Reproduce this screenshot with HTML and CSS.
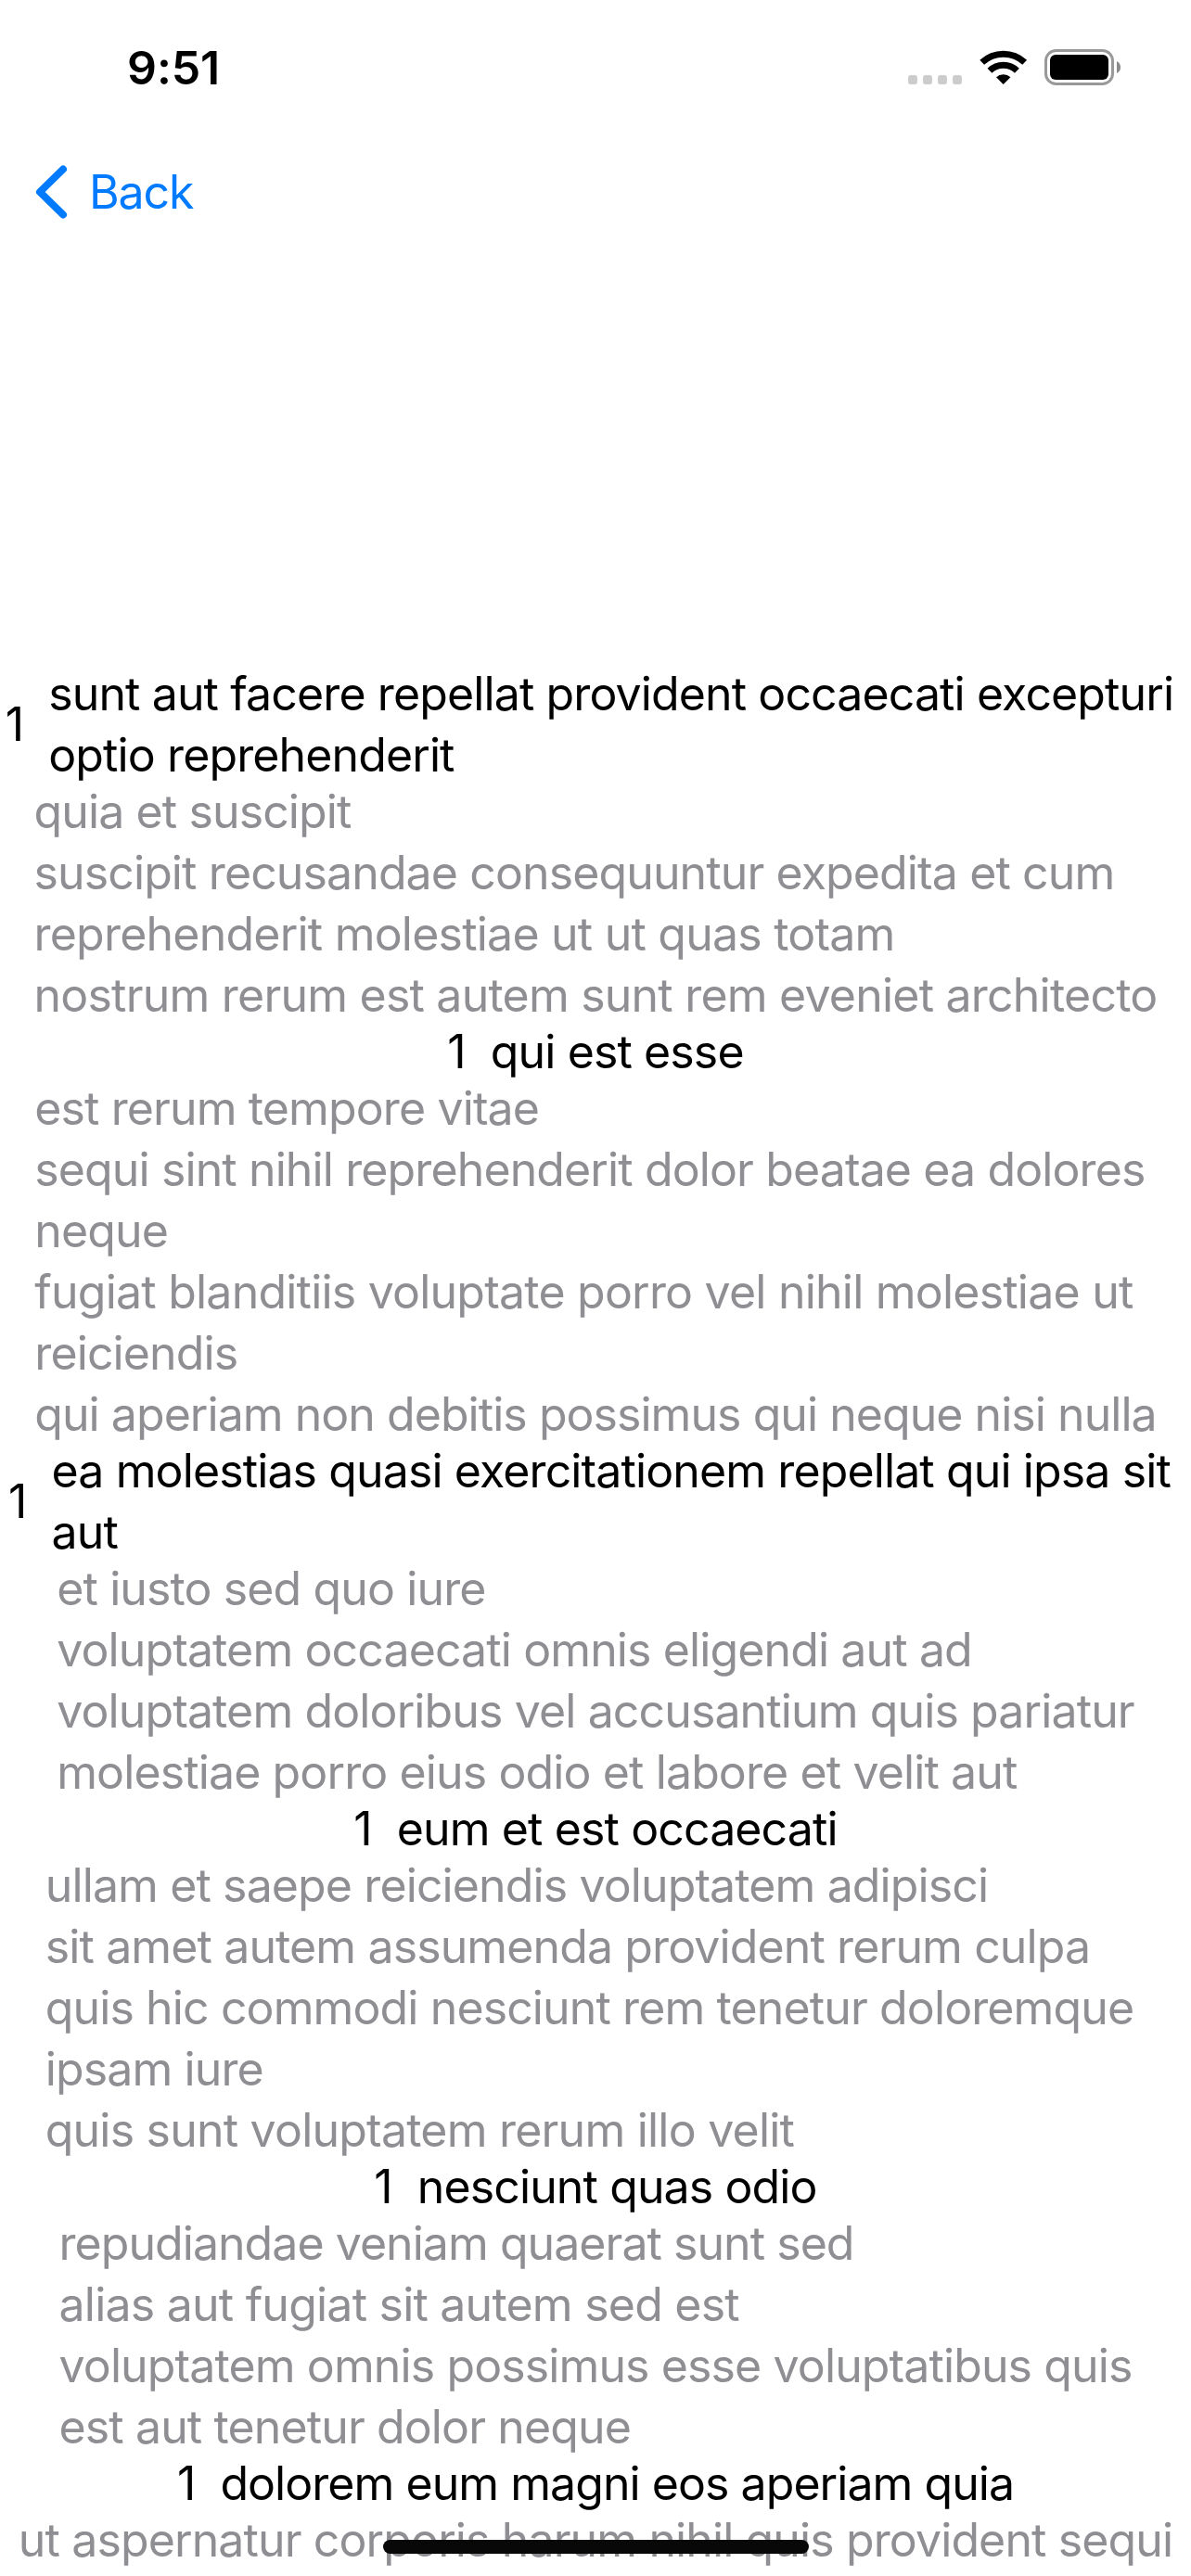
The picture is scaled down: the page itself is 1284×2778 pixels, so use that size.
FILE: index.html
```html
<!DOCTYPE html>
<html lang="en">
<head>
<meta charset="utf-8">
<title>Posts</title>
<link rel="stylesheet" href="styles.css">
</head>
<body>
<div class="screen">
<header class="status">
<span class="time">9:51</span>
<div class="indicators">
<svg class="dots" width="60" height="12" viewBox="0 0 60 12"><g fill="#ccc"><rect width="10" height="10" x="0" y="1" rx="3"/><rect width="10" height="10" x="16" y="1" rx="3"/><rect width="10" height="10" x="32" y="1" rx="3"/><rect width="10" height="10" x="48" y="1" rx="3"/></g></svg>
<svg class="wifi" width="52" height="38" viewBox="0 0 52 38"><g fill="none" stroke="#000" stroke-width="7"><path d="M2.700 13.300a33.500 33.500 0 0 1 46 0"/><path d="M11 22.300a21 21 0 0 1 29.400 0"/></g><path d="M18 29.300a11.500 11.500 0 0 1 15.400 0L25.700 37z"/></svg>
<svg class="battery" width="82" height="40" viewBox="0 0 82 40"><rect x="1.500" y="1.500" width="72" height="36" rx="11" fill="none" stroke="#999" stroke-width="3"/><rect x="6" y="6" width="63" height="27" rx="6"/><path d="M78 13v13q4-2 4-6.500T78 13z" fill="#8a8a8a"/></svg>
</div>
</header>
<nav class="nav"><a class="back"><svg width="36" height="60" viewBox="0 0 36 60"><path d="M31 5.500L6 30l25 24.500" fill="none" stroke="#007aff" stroke-width="8" stroke-linecap="round" stroke-linejoin="round"/></svg><span>Back</span></a></nav>
<main class="posts">
<article class="post"><h2 class="title wrapped"><span class="id">1</span><span>sunt aut facere repellat provident occaecati excepturi<br>optio reprehenderit</span></h2>
<p class="body">quia et suscipit<br>suscipit recusandae consequuntur expedita et cum<br><span class="loose">reprehenderit molestiae ut ut quas totam</span><br><span class="loose">nostrum rerum est autem sunt rem eveniet architecto</span></p></article>
<article class="post"><h2 class="title"><span class="id">1</span><span>qui est esse</span></h2>
<p class="body">est rerum tempore vitae<br>sequi sint nihil reprehenderit dolor beatae ea dolores<br>neque<br><span class="loose">fugiat blanditiis voluptate porro vel nihil molestiae ut</span><br>reiciendis<br><span class="tight">qui aperiam non debitis possimus qui neque nisi nulla</span></p></article>
<article class="post"><h2 class="title wrapped"><span class="id">1</span><span>ea molestias quasi exercitationem repellat qui ipsa sit<br>aut</span></h2>
<p class="body">et iusto sed quo iure<br>voluptatem occaecati omnis eligendi aut ad<br>voluptatem doloribus vel accusantium quis pariatur<br>molestiae porro eius odio et labore et velit aut</p></article>
<article class="post"><h2 class="title"><span class="id">1</span><span>eum et est occaecati</span></h2>
<p class="body wrapped">ullam et saepe reiciendis voluptatem adipisci<br>sit amet autem assumenda provident rerum culpa<br>quis hic commodi nesciunt rem tenetur doloremque<br>ipsam iure<br><span class="loose">quis sunt voluptatem rerum illo velit</span></p></article>
<article class="post"><h2 class="title"><span class="id">1</span><span>nesciunt quas odio</span></h2>
<p class="body"><span class="tight">repudiandae veniam quaerat sunt sed</span><br><span class="loose">alias aut fugiat sit autem sed est</span><br>voluptatem omnis possimus esse voluptatibus quis<br>est aut tenetur dolor neque</p></article>
<article class="post"><h2 class="title"><span class="id">1</span><span class="tight">dolorem eum magni eos aperiam quia</span></h2>
<p class="body">ut aspernatur corporis harum nihil quis provident sequi</p></article>
</main>
<div class="home"></div>
</div>
</body>
</html>
```
FILE: styles.css
```css
body{margin:0;background:#fff}
.screen{position:relative;width:1284px;height:2778px;overflow:hidden;font:400 50px/66px Inter,sans-serif;letter-spacing:-.88px;color:#000}
.status{height:141px;display:flex;justify-content:space-between;box-sizing:border-box;padding:40px 76px 0 137px}
.time{font-weight:600;letter-spacing:-.1px}
.indicators{display:flex;align-items:flex-start}
.dots{margin:40px 17px 0 0}
.wifi{margin:14px 18px 0 0}
.battery{margin-top:13px}
.nav{height:132px;display:flex;align-items:center}
.back{display:flex;align-items:center;gap:23px;margin-left:37px;color:#007aff;letter-spacing:-1.1px}
.posts{padding-top:442px}
.post{display:flex;flex-direction:column;align-items:center}
.title{margin:0 0 -5px;display:flex;align-items:center;gap:27px;font:inherit;white-space:nowrap}
.body{margin:0 0 -5px;color:#8e8e93;white-space:nowrap}
.wrapped{margin-right:13px}
.loose{letter-spacing:-.78px}
.tight{letter-spacing:-.95px}
.home{position:absolute;left:413px;top:2739px;width:459px;height:15px;border-radius:8px;background:#080808}
```
